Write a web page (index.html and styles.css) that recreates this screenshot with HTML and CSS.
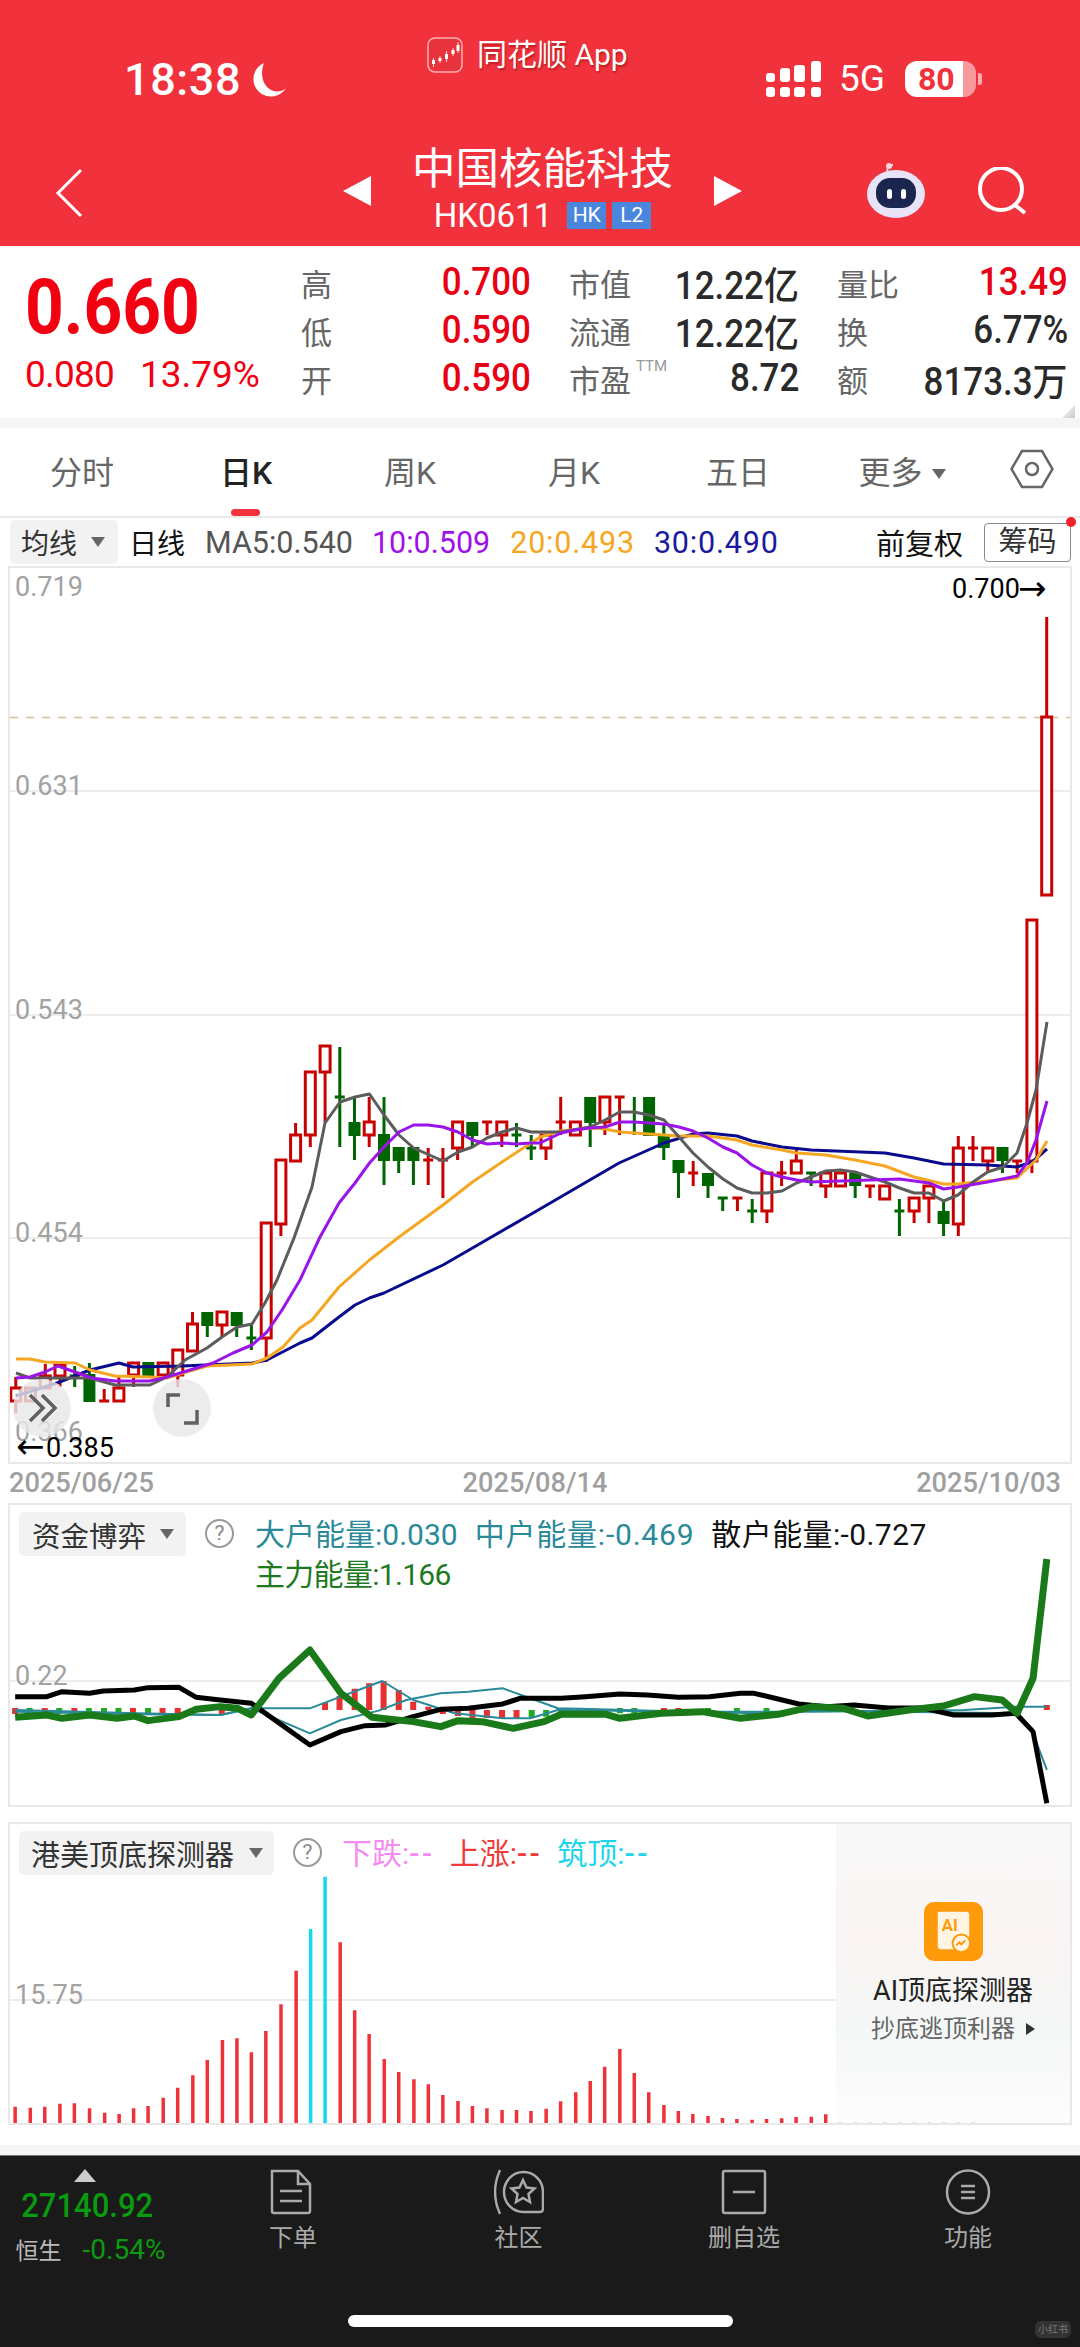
FILE: index.html
```html
<!DOCTYPE html>
<html lang="zh-CN">
<head>
<meta charset="utf-8">
<title>中国核能科技 HK0611</title>
<link rel="stylesheet" href="styles.css">
</head>
<body>
<div class="page">
  <header class="header">
    <div class="status">
      <div class="clock">
        <span class="time">18:38</span>
        <svg class="moon" viewBox="0 0 36 36"><path d="M12 1A17.500 17.500 0 1 0 35 24C33 30 22 32 15 25 9 19 9 8 12 1Z"/></svg>
      </div>
      <div class="app-tag">
        <svg class="app-logo" viewBox="0 0 36 36"><rect x="1" y="1" width="34" height="34" rx="7" class="logo-bg"/><path class="logo-stem" d="M6.500 21v9M13 19v7M19.500 14v11M26 11v8M31 5v11"/><path class="logo-mark" d="M5 23h3v4H5zM11.500 21h3v3h-3zM18 17h3v5h-3zM24.500 13h3v4h-3zM29.500 8h3v6h-3z"/></svg>
        <span>同花顺 App</span>
      </div>
      <div class="net">
        <svg class="signal" viewBox="0 0 55 36"><rect x="0" y="12" width="9" height="9" rx="3"/><rect x="14" y="7" width="10" height="14" rx="3"/><rect x="28" y="4" width="11" height="17" rx="3"/><rect x="45" y="0" width="10" height="21" rx="3"/><rect x="0" y="26" width="9" height="10" rx="3"/><rect x="14" y="26" width="10" height="10" rx="3"/><rect x="28" y="26" width="11" height="10" rx="3"/><rect x="45" y="26" width="10" height="10" rx="3"/></svg>
        <span class="net-type">5G</span>
        <span class="battery">80</span>
      </div>
    </div>
    <nav class="nav">
      <div class="nav-back">
        <svg class="back" viewBox="0 0 28 50"><path d="M26 2 3 25l23 23"/></svg>
      </div>
      <div class="nav-title">
        <span class="tri tri-left"></span>
        <div class="title-block">
          <div class="stock-name">中国核能科技</div>
          <div class="stock-code"><span class="code">HK0611</span><span class="badge">HK</span><span class="badge">L2</span></div>
        </div>
        <span class="tri tri-right"></span>
      </div>
      <div class="nav-actions">
        <svg class="robot" viewBox="0 0 60 56"><path class="antenna" d="M22 11C20 7 22 2 27 2"/><circle class="antenna-tip" cx="23" cy="3" r="3"/><ellipse class="robot-head" cx="30" cy="31" rx="29" ry="24"/><rect class="robot-visor" x="10" y="15" width="40" height="30" rx="14"/><rect class="robot-eye" x="21" y="26" width="5" height="10" rx="2.500"/><rect class="robot-eye" x="35" y="26" width="5" height="10" rx="2.500"/></svg>
        <svg class="search" viewBox="0 0 50 48"><circle cx="23" cy="22" r="21"/><path d="m37 38 10 8"/></svg>
      </div>
    </nav>
  </header>

  <section class="quote">
    <div class="price">
      <div class="last">0.660</div>
      <div class="change"><span class="chg-abs">0.080</span><span>13.79%</span></div>
    </div>
    <div class="stats">
      <div class="stat"><span class="k">高</span><span class="v up">0.700</span></div>
      <div class="stat"><span class="k">市值</span><span class="v">12.22亿</span></div>
      <div class="stat"><span class="k">量比</span><span class="v up">13.49</span></div>
      <div class="stat"><span class="k">低</span><span class="v up">0.590</span></div>
      <div class="stat"><span class="k">流通</span><span class="v">12.22亿</span></div>
      <div class="stat"><span class="k">换</span><span class="v">6.77%</span></div>
      <div class="stat"><span class="k">开</span><span class="v up">0.590</span></div>
      <div class="stat"><span class="k">市盈<sup class="ttm">TTM</sup></span><span class="v">8.72</span></div>
      <div class="stat"><span class="k">额</span><span class="v">8173.3万</span></div>
    </div>
    <span class="corner"></span>
  </section>

  <div class="tabs">
    <span class="tab">分时</span>
    <span class="tab active">日K</span>
    <span class="tab">周K</span>
    <span class="tab">月K</span>
    <span class="tab">五日</span>
    <span class="tab">更多<i class="mini-tri"></i></span>
    <span class="tab-icon"><svg class="hex" viewBox="0 0 44 40"><path d="M1.500 20 12 2h20l10.500 18L32 38H12Z"/><circle cx="22" cy="20" r="6"/></svg></span>
  </div>

  <div class="ma-bar">
    <span class="select ma-select">均线<i class="sel-tri"></i></span>
    <span class="ma-day">日线</span>
    <span class="ma ma5">MA5:0.540</span>
    <span class="ma ma10">10:0.509</span>
    <span class="ma ma20">20:0.493</span>
    <span class="ma ma30">30:0.490</span>
    <span class="adjust">前复权</span>
    <span class="chips">筹码<i class="dot"></i></span>
  </div>

  <div class="chart">
    <svg class="plot" viewBox="10 568 1060 894">
      <path class="grid" d="M10 791H1070M10 1015H1070M10 1238H1070"/>
      <path class="dash" d="M10 717.500H1070"/>
      <text class="axis" x="15" y="596">0.719</text>
      <text class="axis" x="15" y="795">0.631</text>
      <text class="axis" x="15" y="1019">0.543</text>
      <text class="axis" x="15" y="1242">0.454</text>
      <text class="axis" x="15" y="1441">0.366</text>

      <path class="wick-red" d="M15.800 1377V1413M45.300 1364V1376M60 1364V1387M104.200 1389V1401M118.900 1377V1388M133.600 1375V1387M177.800 1375V1387M192.500 1312V1324M222 1325V1337M266.200 1338V1362M280.900 1224V1236M295.600 1123V1135M310.300 1135V1147M325.100 1072V1123M369.200 1097V1147M428.200 1148V1185M442.900 1148V1198M457.600 1148V1160M487.100 1122V1135M501.800 1135V1147M546 1148V1160M560.700 1097V1135M604.900 1122V1135M619.600 1097V1135M693.200 1161V1186M737.400 1198V1211M766.900 1211V1223M781.600 1161V1186M796.300 1150V1161M825.800 1186V1198M870 1186V1198M914.100 1211V1223M928.900 1198V1223M958.300 1136V1148M958.300 1224V1236M973 1136V1161M987.800 1161V1173M1017.200 1161V1173M1031.900 1161V1173M1046.700 617V717M99.200 1401h10M423.200 1160h10M437.900 1160h10M482.100 1122h10M555.700 1122h10M614.600 1097h10M688.200 1173h10M732.400 1198h10M776.600 1173h10M865 1186h10M968 1148h10M1012.200 1161h10"/>
      <path class="body-red" d="M10.800 1388h10v13h-10zM25.500 1388h10v13h-10zM40.300 1376h10v12h-10zM55 1365h10v11H55zM113.900 1388h10v13h-10zM128.600 1363h10v12h-10zM158.100 1363h10v12h-10zM172.800 1350h10v25h-10zM187.500 1324h10v27h-10zM217 1312h10v13h-10zM261.200 1223h10v115h-10zM275.900 1160h10v64h-10zM290.600 1135h10v26h-10zM305.300 1072h10v63h-10zM320.100 1046h10v26h-10zM364.200 1122h10v13h-10zM452.600 1122h10v26h-10zM496.800 1122h10v13h-10zM541 1135h10v13h-10zM570.400 1122h10v13h-10zM599.900 1097h10v25h-10zM761.900 1173h10v38h-10zM791.300 1161h10v12h-10zM820.800 1173h10v13h-10zM835.500 1173h10v13h-10zM879.700 1186h10v13h-10zM909.100 1198h10v13h-10zM923.900 1186h10v12h-10zM953.300 1148h10v76h-10zM982.800 1148h10v13h-10zM1026.900 920h10v241h-10zM1041.700 717h10v178h-10z"/>
      <path class="wick-green" d="M74.700 1366V1387M89.400 1363V1374M207.300 1326V1337M236.700 1326V1337M251.400 1325V1350M339.800 1047V1147M354.500 1097V1160M384 1097V1185M398.700 1161V1173M413.400 1161V1185M472.300 1136V1147M516.500 1123V1147M531.200 1135V1160M590.200 1123V1147M634.300 1097V1135M663.800 1123V1160M678.500 1173V1198M708 1186V1198M722.700 1198V1211M752.200 1199V1223M811.100 1173V1186M855.200 1186V1198M899.400 1199V1236M943.600 1200V1236M1002.500 1161V1173M69.700 1376h10M246.400 1338h10M334.800 1097h10M511.500 1135h10M526.200 1148h10M717.700 1198h10M747.200 1211h10M806.100 1173h10M894.400 1211h10"/>
      <path class="body-green" d="M83.400 1374h12v28h-12zM142.300 1362h12v14h-12zM201.300 1312h12v14h-12zM230.700 1312h12v14h-12zM348.500 1122h12v14h-12zM378 1134h12v27h-12zM392.700 1147h12v14h-12zM407.400 1147h12v14h-12zM466.300 1122h12v14h-12zM584.200 1097h12v26h-12zM643.100 1097h12v39h-12zM657.800 1136h12v12h-12zM672.500 1160h12v13h-12zM702 1173h12v13h-12zM849.200 1173h12v13h-12zM937.600 1211h12v13h-12zM996.500 1147h12v14h-12z"/>

      <polyline class="line navy" points="16,1396 57,1383 90,1370 119,1363 133,1367 182,1366 252,1363 267,1360 300,1343 312,1338 339,1317 355,1305 369.500,1298 384,1293 443,1265 472.500,1248 540,1209 619,1163 664,1143 693,1134 708,1133 737,1136 752,1141 782,1147 811,1150 885,1153 914,1158 943.600,1164 987.600,1165 1017,1167 1032,1162 1047,1149"/>
      <polyline class="line orange" points="16,1359 30,1359 45,1362 75,1363 90,1370 115,1376 150,1377 167,1378 183,1373 207,1366 252,1364 267,1358 283,1347 300,1328 312,1320 339,1287 369.500,1260 399,1237 443,1205 472.500,1182 502,1162 531,1143 540,1137 561,1131 590,1128 605,1129 620,1132 649,1134 679,1136 708,1136 737,1140 752,1145 782,1150 796.500,1153 826,1155 855,1160 885,1166 914,1177 943.600,1184 958,1184 987.600,1181 1017,1178 1036,1160 1047,1141"/>
      <polyline class="line gray" points="16,1373 30,1378 90,1378 115,1385 150,1385 167,1377 185,1360 207,1348 222,1337 237,1327 252,1324 265,1303 277,1280 294,1238 312,1187 325,1123 340,1102 355,1097 369.500,1094 384,1115 399,1135 413.600,1148 443,1161 458,1152 472.500,1147 487,1138 502,1132 516.500,1128 531,1132 561,1132 590,1127 605,1120 619.600,1112 634,1112 649,1115 664,1120 679,1137 693,1153 708,1167 723,1179 737,1188 752,1193 767,1193 782,1191 796.500,1183 811,1177 826,1171 840.600,1170 855,1172 870,1177 885,1182 899.600,1188 914,1193 929,1193 943.600,1201 958,1195 973,1182 987.600,1172 1003,1167 1017,1153 1027,1123 1036,1090 1047,1022"/>
      <polyline class="line purple" points="16,1378 30,1377 45,1372 58,1366 75,1372 92,1378 115,1381 150,1381 167,1377 213,1363 233,1353 252,1345 267,1332 282,1310 300,1280 320,1237 339,1203 355,1183 369.500,1163 384,1147 399,1132 413.600,1125 428,1125 443,1127 458,1132 472.500,1140 487,1144 502,1143 516.500,1144 531,1143 540,1143 561,1133 575,1130 590,1128 605,1127 620,1122 634,1122 664,1124 679,1127 693,1131 708,1138 723,1147 737,1153 752,1165 767,1173 782,1177 796.500,1180 811,1182 899.600,1179 929,1183 943.600,1189 958,1187 987.600,1182 1017,1176 1027,1163 1036,1140 1047,1101"/>

      <circle class="float-btn" cx="42" cy="1408" r="29"/>
      <circle class="float-btn" cx="182" cy="1408" r="29"/>
      <path class="float-icon" d="M30 1395l13 13-13 13M42 1395l13 13-13 13M168 1407v-12h12M197 1410v13h-13"/>
      <text class="ext arrow" x="16" y="1458">←</text>
      <text class="ext" x="46" y="1457">0.385</text>
      <text class="ext" x="952" y="598">0.700</text>
      <text class="ext arrow" x="1018" y="600">→</text>
    </svg>
  </div>

  <div class="dates"><span>2025/06/25</span><span>2025/08/14</span><span>2025/10/03</span></div>

  <section class="panel panel-energy">
    <svg class="panel-plot" viewBox="10 1505 1060 300">
      <path class="grid" d="M10 1681H1070"/>
      <g transform="translate(0 1480) scale(.6887 .3333)">
        <path class="hist-red" d="M22 684V702M65 684V702M108 684V702M193 684V702M236 684V702M258 684V702M322 684V702M472 690V668M493 690V648M515 690V626M536 690V610M557 690V603M579 690V630M600 690V665M622 690V680M643 690V702M665 690V708M686 690V714M707 690V714M729 690V716M750 690V716M964 684V696M985 684V696M1350 684V694M1520 675V690"/>
        <path class="hist-green" d="M43 684V702M86 684V702M129 684V702M151 684V702M172 684V702M215 684V702M772 690V712M793 690V710M815 684V700M857 684V700M900 684V700M921 684V700M1028 684V700M1070 684V700M1113 684V700"/>
        <polyline class="eng teal" points="22,690 200,700 320,705 365,685 450,685 555,603 600,660 660,700 730,715 770,715 810,690 1000,695 1180,695 1400,690 1475,680 1520,680"/>
        <polyline class="eng teal" points="22,695 200,703 320,705 365,685 450,760 495,720 550,692 590,660 640,640 680,635 730,625 770,655 810,685 870,688 1000,695 1100,700 1180,690 1300,695 1475,700 1500,760 1520,870"/>
        <polyline class="eng black" points="22,650 68,650 90,635 130,640 150,633 195,630 215,623 260,622 285,652 320,660 365,670 450,795 495,755 530,737 560,735 600,710 640,688 680,685 730,672 755,655 815,655 850,650 900,642 940,645 985,652 1030,650 1075,640 1095,640 1160,672 1200,680 1240,675 1290,684 1340,684 1385,705 1440,705 1475,700 1500,755 1520,970"/>
        <polyline class="eng green" points="22,712 68,705 90,715 130,705 170,715 195,708 215,722 260,710 285,688 320,680 345,685 365,705 405,595 450,510 495,640 540,712 600,725 640,740 665,722 700,725 745,745 790,725 815,703 880,703 900,715 960,700 1020,695 1075,715 1130,703 1180,680 1225,685 1260,708 1320,690 1370,678 1415,650 1455,660 1477,700 1500,595 1520,237"/>
      </g>
      <text class="axis" x="15" y="1685">0.22</text>
    </svg>
    <div class="panel-head">
      <span class="select energy-select">资金博弈<i class="sel-tri"></i></span>
      <span class="help">?</span>
      <div class="legend">
        <span class="c-teal lg-big">大户能量:0.030</span>
        <span class="c-teal lg-mid">中户能量:-0.469</span>
        <span class="c-black lg-low">散户能量:-0.727</span>
        <span class="c-green lg-main">主力能量:1.166</span>
      </div>
    </div>
  </section>

  <section class="panel panel-detect">
    <svg class="panel-plot" viewBox="10 1824 1060 299">
      <path class="grid" d="M10 2000H1070"/>
      <g transform="translate(0 1810) scale(.6887 .3333)">
        <path class="bar-red" d="M22 940V890M44 940V893M65 940V890M87 940V881M108 940V880M130 940V895M152 940V908M173 940V912M194 940V895M215 940V888M237 940V863M258 940V833M280 940V796M301 940V750M323 940V690M344 940V685M365 940V727M386 940V663M408 940V583M430 940V482M494 940V397M515 940V601M536 940V672M558 940V747M579 940V786M601 940V808M622 940V823M643 940V855M665 940V873M686 940V888M707 940V895M729 940V900M750 940V900M771 940V903M793 940V896M814 940V874M836 940V847M857 940V813M878 940V770M900 940V717M921 940V789M942 940V847M964 940V885M985 940V903M1006 940V912M1028 940V918M1049 940V924M1070 940V927M1092 940V929M1113 940V927M1135 940V925M1156 940V921M1178 940V920M1199 940V913M1220 940V936M1242 940V936M1263 940V936M1285 940V936M1306 940V936M1328 940V936M1349 940V936M1370 940V936M1392 940V936M1413 940V936"/>
        <path class="bar-cyan" d="M451 940V357M472 940V200"/>
      </g>
      <text class="axis" x="15" y="2004">15.75</text>
    </svg>
    <div class="panel-head detect-head">
      <span class="select detect-select">港美顶底探测器<i class="sel-tri"></i></span>
      <span class="help">?</span>
      <div class="legend legend-line">
        <span class="c-pink">下跌:<b class="dashes">--</b></span>
        <span class="c-red">上涨:<b class="dashes">--</b></span>
        <span class="c-cyan">筑顶:<b class="dashes">--</b></span>
      </div>
    </div>
    <aside class="ai-card">
      <svg class="ai-icon" viewBox="0 0 60 60">
        <rect class="ai-bg" width="60" height="60" rx="10"/>
        <path class="ai-doc" d="M14 10h29a3 3 0 0 1 3 3v35H17a3 3 0 0 1-3-3Z"/>
        <text class="ai-letters" x="18" y="29">AI</text>
        <circle class="ai-ring" cx="38" cy="42" r="9"/>
        <path class="ai-tick" d="m33 44 3-3 2 2 4-4"/>
      </svg>
      <div class="ai-title">AI顶底探测器</div>
      <div class="ai-sub">抄底逃顶利器<i class="ai-tri"></i></div>
    </aside>
  </section>

  <div class="footer-gap"></div>

  <footer class="footer">
    <div class="footer-row">
      <div class="index">
        <i class="index-tri"></i>
        <div class="index-value">27140.92</div>
        <div class="index-meta"><span class="index-name">恒生</span><span class="index-pct">-0.54%</span></div>
      </div>
      <div class="action">
        <svg class="act-icon" viewBox="0 0 50 46"><path d="M4 2h26l12 13v27q0 2-2 2H6q-2 0-2-2ZM30 2v13h12M12 22h22M12 32h22"/></svg>
        <span>下单</span>
      </div>
      <div class="action">
        <svg class="act-icon" viewBox="0 0 50 46"><path d="M6 1Q-4 23 6 45M49 23a19.500 20 0 1 0-19.500 20H46a3 3 0 0 0 3-3Z"/><path d="m29 11 3.500 7.500 8 1-6 5.500 1.500 8-7-4-7 4 1.500-8-6-5.500 8-1Z"/></svg>
        <span>社区</span>
      </div>
      <div class="action">
        <svg class="act-icon" viewBox="0 0 50 46"><path d="M4 4q0-2 2-2h38q2 0 2 2v38q0 2-2 2H6q-2 0-2-2ZM14 23h22"/></svg>
        <span>删自选</span>
      </div>
      <div class="action">
        <svg class="act-icon" viewBox="0 0 50 46"><ellipse cx="25" cy="23" rx="21" ry="21.500"/><path d="M18 17h14M18 23h14M18 29h14"/></svg>
        <span>功能</span>
      </div>
    </div>
    <div class="home-bar"></div>
    <span class="watermark">小红书</span>
  </footer>
</div>
</body>
</html>
```

FILE: styles.css
```css
* { box-sizing: border-box; }
html, body { margin: 0; padding: 0; background: #fff; }
body { font-family: Roboto, "Noto Sans CJK SC", sans-serif; color: #222; }
i { font-style: normal; display: inline-block; }
sup { line-height: 0; }
.page { width: 1080px; height: 2347px; display: flex; flex-direction: column; overflow: hidden; }

/* header */
.header { height: 246px; background: #f1323c; color: #fff; flex: none; }
.status { height: 143px; display: grid; grid-template-columns: 303px 412px 1fr; padding-left: 124px; align-items: start; }
.clock { display: flex; align-items: center; gap: 11px; padding-top: 57px; }
.time { font-size: 45px; line-height: 46px; font-weight: 500; letter-spacing: .6px; }
.moon { width: 36px; height: 36px; fill: #fff; }
.app-tag { display: flex; align-items: center; gap: 14px; padding-top: 37px; font-size: 30px; line-height: 36px; text-shadow: 1px 2px 2px rgba(120, 0, 0, .45); }
.app-logo { width: 36px; height: 36px; }
.logo-bg { fill: #e8323c; stroke: #ffb0b0; stroke-width: 1.500; }
.logo-mark { fill: #fff; }
.logo-stem { fill: none; stroke: #ffd0d0; stroke-width: 1; }
.net { display: flex; align-items: center; padding-top: 61px; }
.signal { width: 55px; height: 36px; fill: #fff; margin-left: -73px; flex: none; }
.net-type { font-size: 37px; line-height: 36px; margin-left: 18px; }
.battery { position: relative; width: 71px; height: 36px; margin-left: 20px; padding-left: 13px; border-radius: 12px; background: linear-gradient(90deg, #fff 82%, rgba(255, 255, 255, .5) 82%); color: #f1323c; font-size: 32px; line-height: 36px; font-weight: 700; flex: none; }
.battery::after { content: ""; position: absolute; right: -6px; top: 12px; width: 4px; height: 12px; border-radius: 0 3px 3px 0; background: rgba(255, 255, 255, .6); }

.nav { display: flex; padding-left: 55px; height: 103px; }
.nav-back { width: 288px; padding-top: 25px; }
.back { width: 28px; height: 50px; fill: none; stroke: #fff; stroke-width: 3; display: block; }
.nav-title { width: 399px; display: flex; justify-content: space-between; align-items: flex-start; padding-top: 33px; }
.tri { width: 0; height: 0; border-top: 15px solid transparent; border-bottom: 15px solid transparent; }
.tri-left { border-right: 28px solid #fff; }
.tri-right { border-left: 28px solid #fff; }
.title-block { margin-top: -33px; text-align: center; }
.stock-name { font-size: 43.500px; line-height: 52px; margin-top: 1px; }
.stock-code { display: flex; justify-content: center; align-items: center; gap: 6px; margin-top: 6px; height: 27px; }
.code { font-size: 33px; line-height: 27px; margin-right: 9px; }
.badge { width: 39px; height: 27px; background: #4a86dc; font-size: 21px; line-height: 27px; text-align: center; }
.nav-actions { margin-left: 124px; display: flex; gap: 52px; }
.robot { width: 60px; height: 56px; margin-top: 20px; }
.antenna { fill: none; stroke: #f8d8e0; stroke-width: 2; }
.antenna-tip { fill: #f8d8e0; }
.robot-head { fill: #e6e4f6; }
.robot-visor { fill: #1a2550; }
.robot-eye { fill: #fff; }
.search { width: 50px; height: 48px; margin-top: 24px; fill: none; stroke: #fff; stroke-width: 4; }

/* quote */
.quote { position: relative; height: 172px; display: flex; padding-left: 25px; flex: none; }
.price { width: 276px; }
.last { font-size: 76px; line-height: 76px; font-weight: 700; color: #f00010; margin-top: 23px; transform: scaleX(.89); transform-origin: 0 50%; }
.change { display: flex; gap: 26px; margin-top: 10px; font-size: 37px; line-height: 40px; color: #f00010; }
.chg-abs { letter-spacing: -.8px; }
.stats { display: grid; grid-template-columns: 230px 230px 231px; column-gap: 38px; grid-auto-rows: 48px; padding-top: 12px; }
.stat { display: flex; justify-content: space-between; align-items: center; }
.k { font-size: 31px; color: #666; white-space: nowrap; }
.v { font-size: 38px; font-weight: 500; color: #2a2a2a; white-space: nowrap; transform: scaleX(.92); transform-origin: 100% 50%; }
.v.up { color: #e80014; }
.ttm { font-size: 15px; color: #999; margin-left: 5px; position: relative; top: -9px; }
.corner { position: absolute; right: 5px; bottom: 0; width: 13px; height: 13px; background: linear-gradient(135deg, #fff, #c8c8c8); clip-path: polygon(100% 0, 100% 100%, 0 100%); }

/* tabs */
.tabs { height: 100px; flex: none; display: flex; align-items: stretch; border-top: 10px solid #f5f5f5; border-bottom: 2px solid #eaeaea; }
.tab { position: relative; width: 164px; text-align: center; font-size: 32px; line-height: 90px; color: #666; }
.tab.active { color: #222; font-weight: 500; }
.tab.active::after { content: ""; position: absolute; left: 67px; bottom: 0; width: 29px; height: 7px; border-radius: 4px; background: #f5333f; }
.mini-tri { width: 0; height: 0; margin-left: 9px; vertical-align: 5px; border-left: 7px solid transparent; border-right: 7px solid transparent; border-top: 10px solid #666; }
.tab-icon { flex: 1; display: flex; align-items: center; justify-content: center; padding-bottom: 6px; }
.hex { width: 44px; height: 40px; fill: none; stroke: #666; stroke-width: 2.500; }

/* moving average row */
.ma-bar { height: 48px; flex: none; display: flex; align-items: center; padding-left: 10px; position: relative; }
.select { display: inline-flex; align-items: center; background: #f2f2f2; border-radius: 5px; height: 44px; color: #333; }
.sel-tri { width: 0; height: 0; border-left: 7.500px solid transparent; border-right: 7.500px solid transparent; border-top: 10px solid #666; }
.ma-select { width: 108px; padding-left: 11px; font-size: 28px; gap: 14px; }
.ma-day { margin-left: 11px; font-size: 28px; color: #111; }
.ma { font-size: 30.500px; }
.ma5 { margin-left: 20px; color: #555; }
.ma10 { margin-left: 19px; color: #a010e8; }
.ma20 { margin-left: 20px; color: #f5a623; letter-spacing: .8px; }
.ma30 { margin-left: 19px; color: #1a1a9e; letter-spacing: .8px; }
.adjust { margin-left: auto; font-size: 29px; color: #111; }
.chips { position: relative; width: 87px; height: 39px; margin: 0 9px 0 21px; border: 1.500px solid #888; border-radius: 4px; font-size: 29px; line-height: 36px; text-align: center; color: #333; }
.dot { position: absolute; right: -6px; top: -7px; width: 10px; height: 10px; border-radius: 50%; background: #f5222d; }

/* chart */
.chart { height: 898px; margin: 0 8px; border: 2px solid #e8e8e8; flex: none; }
.plot { display: block; width: 1060px; height: 894px; }
.grid { stroke: #ececec; stroke-width: 2; fill: none; }
.dash { stroke: #dcc09a; stroke-width: 1.500; stroke-dasharray: 8 8; fill: none; }
.axis { font-size: 27px; font-weight: 400; fill: #a2a2a2; }
.ext { font-size: 27px; fill: #000; }
.arrow { font-size: 34px; font-family: "DejaVu Sans", sans-serif; }
.wick-red { stroke: #c80000; stroke-width: 3; fill: none; }
.wick-green { stroke: #006400; stroke-width: 3; fill: none; }
.body-red { stroke: #c80000; stroke-width: 3; fill: #fff; }
.body-green { fill: #006400; }
.line { fill: none; stroke-width: 3; stroke-linejoin: round; }
.gray { stroke: #5c5c5c; }
.purple { stroke: #9a14e8; }
.orange { stroke: #f5a623; }
.navy { stroke: #0a0a8c; }
.float-btn { fill: rgba(232, 232, 232, .82); }
.float-icon { fill: none; stroke: #606060; stroke-width: 3.500; }

.dates { height: 39px; flex: none; display: flex; justify-content: space-between; padding: 0 19px 0 9px; font-size: 27.200px; font-weight: 500; line-height: 38px; color: #a0a0a0; }

/* indicator panels */
.panel { position: relative; margin: 0 8px; border: 2px solid #e8e8e8; flex: none; }
.panel-energy { height: 304px; }
.panel-detect { height: 303px; margin-top: 15px; }
.panel-plot { position: absolute; left: 0; top: 0; width: 1060px; height: 100%; display: block; }
.eng, .hist-red, .hist-green, .bar-red, .bar-cyan { fill: none; vector-effect: non-scaling-stroke; }
.eng { stroke-linejoin: round; }
.hist-red { stroke: #e83030; stroke-width: 6; }
.hist-green { stroke: #22aa22; stroke-width: 6; }
.teal { stroke: #2a8a9a; stroke-width: 2; }
.black { stroke: #000; stroke-width: 5; }
.green { stroke: #1a7a1a; stroke-width: 7; }
.bar-red { stroke: #ee3338; stroke-width: 3.500; }
.bar-cyan { stroke: #14d8ec; stroke-width: 3.500; }
.panel-head { position: relative; display: flex; align-items: flex-start; padding: 7px 0 0 9px; }
.energy-select { width: 167px; padding-left: 13px; font-size: 28.500px; gap: 14px; flex: none; }
.detect-select { width: 255px; padding-left: 12px; font-size: 29px; gap: 15px; flex: none; }
.help { flex: none; width: 29px; height: 29px; margin: 7px 0 0 19px; border: 2px solid #999; border-radius: 50%; text-align: center; font-size: 21px; line-height: 25px; color: #888; }
.legend { display: flex; flex-wrap: wrap; width: 700px; margin: 3px 0 0 21px; column-gap: 17px; font-size: 30px; line-height: 40px; }
.c-teal { color: #2a8a9a; }
.c-black { color: #111; }
.c-green { color: #1f7a1f; }
.lg-mid { letter-spacing: .8px; }
.lg-low { letter-spacing: .4px; }
.lg-main { letter-spacing: -.7px; }
.legend-line { margin-left: 20px; column-gap: 15px; }
.dashes { font-weight: 500; letter-spacing: 2.500px; }
.c-pink { color: #f48cf0; }
.c-red { color: #ee3a3a; }
.c-cyan { color: #1ed6ea; }
.ai-card { position: absolute; right: 0; top: 0; bottom: 0; width: 234px; display: flex; flex-direction: column; align-items: center; padding-top: 78px; background: linear-gradient(180deg, rgba(248, 248, 248, .9), rgba(250, 243, 243, .95) 38%, rgba(243, 247, 245, .95) 68%, rgba(252, 252, 252, .8)); }
.ai-icon { width: 59px; height: 59px; }
.ai-bg { fill: #ff9a0a; }
.ai-doc { fill: #fff5e2; }
.ai-letters { font-size: 17px; font-weight: 700; fill: #ff9a0a; }
.ai-ring { fill: #fff5e2; stroke: #ff9a0a; stroke-width: 2; }
.ai-tick { fill: none; stroke: #ff9a0a; stroke-width: 2; }
.ai-title { margin-top: 13px; font-size: 27px; line-height: 34px; color: #222; }
.ai-sub { margin-top: 6px; display: flex; align-items: center; gap: 11px; font-size: 24px; line-height: 30px; color: #666; }
.ai-tri { width: 0; height: 0; border-top: 6px solid transparent; border-bottom: 6px solid transparent; border-left: 9px solid #333; }

/* footer */
.footer-gap { height: 30px; flex: none; background: linear-gradient(180deg, #fff 0 20px, #f5f5f5 20px); }
.footer { position: relative; flex: 1; background: #1a1a1a; border-top: 1px solid #777; display: flex; flex-direction: column; }
.footer-row { display: grid; grid-template-columns: 181px 224px 227px 224px 224px; padding-top: 13px; }
.index { display: flex; flex-direction: column; align-items: center; }
.index-tri { width: 0; height: 0; margin-right: 12px; border-left: 11px solid transparent; border-right: 11px solid transparent; border-bottom: 13px solid #ccc; }
.index-value { margin-top: 9px; margin-right: 6px; font-size: 33px; line-height: 30px; font-weight: 500; color: #0a9a10; transform: scaleX(.94); }
.index-meta { display: flex; align-items: baseline; gap: 21px; margin-top: 11px; }
.index-name { font-size: 23px; color: #bbb; }
.index-pct { font-size: 28px; color: #0a9a10; }
.action { display: flex; flex-direction: column; align-items: center; color: #aaa; font-size: 24px; line-height: 30px; }
.act-icon { width: 50px; height: 46px; fill: none; stroke: #aaa; stroke-width: 2.500; margin-bottom: 8px; }
.home-bar { width: 385px; height: 12px; margin: auto auto 20px; border-radius: 6px; background: #fff; }
.watermark { position: absolute; right: 9px; bottom: 9px; width: 36px; height: 17px; border-radius: 6px; background: #333; color: #777; font-size: 10px; line-height: 17px; text-align: center; }
```
